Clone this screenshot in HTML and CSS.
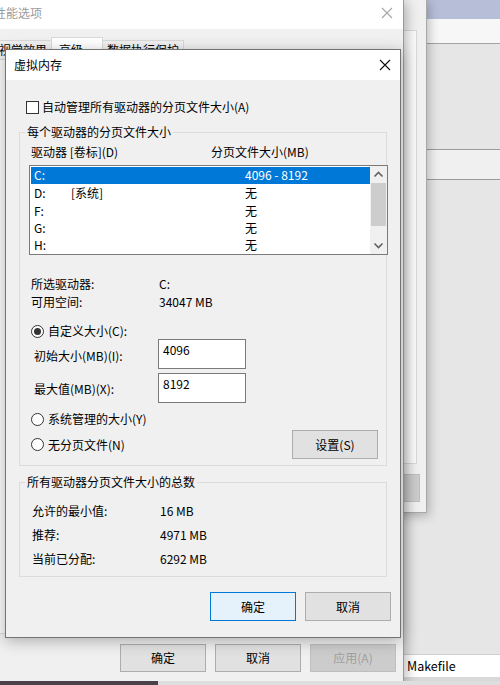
FILE: index.html
```html
<!DOCTYPE html>
<html lang="zh-CN">
<head>
<meta charset="utf-8">
<title>虚拟内存</title>
<link rel="stylesheet" href="styles.css">
</head>
<body>
<div class="desktop">

  <div class="explorer">
    <div class="ex-title"></div>
    <div class="ex-ribbon"></div>
    <div class="ex-pane"></div>
    <div class="ex-band"></div>
    <div class="ex-list"></div>
    <div class="ex-file">Makefile</div>
    <div class="ex-rest"></div>
  </div>

  <div class="sysprops">
    <div class="sp-page"></div>
    <div class="sp-buttons"><div class="sp-btn"></div></div>
  </div>

  <div class="perf">
    <div class="perf-title">
      <span class="perf-caption">性能选项</span>
      <svg class="perf-close" width="12" height="12" viewBox="0 0 12 12"><path d="M1 1L11 11M11 1L1 11" stroke="#a6a6a6" stroke-width="1.1" fill="none"/></svg>
    </div>
    <div class="perf-tabs">
      <div class="tab tab-first">视觉效果</div>
      <div class="tab tab-active">高级</div>
      <div class="tab tab-last">数据执行保护</div>
    </div>
    <div class="perf-page"></div>
    <div class="perf-buttons">
      <div class="btn">确定</div>
      <div class="btn">取消</div>
      <div class="btn btn-disabled">应用(A)</div>
    </div>
  </div>

  <div class="dialog">
    <div class="dlg-title">
      <span>虚拟内存</span>
      <svg class="dlg-close" width="12" height="12" viewBox="0 0 12 12"><path d="M1 1L11 11M11 1L1 11" stroke="#111" stroke-width="1.1" fill="none"/></svg>
    </div>
    <div class="dlg-body">
      <div class="check-row">
        <span class="checkbox"></span>
        <span>自动管理所有驱动器的分页文件大小(A)</span>
      </div>

      <fieldset class="group group-drives">
        <legend>每个驱动器的分页文件大小</legend>
        <div class="col-heads">
          <span class="col-drive">驱动器 [卷标](D)</span>
          <span>分页文件大小(MB)</span>
        </div>
        <div class="listbox">
          <div class="list-rows">
            <div class="lrow selected"><span class="c1">C:</span><span class="c2"></span><span>4096 - 8192</span></div>
            <div class="lrow"><span class="c1">D:</span><span class="c2">[系统]</span><span>无</span></div>
            <div class="lrow"><span class="c1">F:</span><span class="c2"></span><span>无</span></div>
            <div class="lrow"><span class="c1">G:</span><span class="c2"></span><span>无</span></div>
            <div class="lrow"><span class="c1">H:</span><span class="c2"></span><span>无</span></div>
          </div>
          <div class="scrollbar">
            <svg class="arrow" width="17" height="17" viewBox="0 0 17 17"><path d="M4.5 10.5L8.5 6.5L12.5 10.5" stroke="#606060" stroke-width="1.6" fill="none"/></svg>
            <div class="thumb"></div>
            <div class="track"></div>
            <svg class="arrow" width="17" height="17" viewBox="0 0 17 17"><path d="M4.5 6.5L8.5 10.5L12.5 6.5" stroke="#606060" stroke-width="1.6" fill="none"/></svg>
          </div>
        </div>

        <div class="info-row first"><span class="info-label">所选驱动器:</span><span>C:</span></div>
        <div class="info-row"><span class="info-label">可用空间:</span><span>34047 MB</span></div>

        <div class="radio-row custom"><span class="radio on"></span><span>自定义大小(C):</span></div>

        <div class="field-row first-field">
          <span class="field-label">初始大小(MB)(I):</span>
          <div class="textbox">4096</div>
        </div>
        <div class="field-row second-field">
          <span class="field-label">最大值(MB)(X):</span>
          <div class="textbox">8192</div>
        </div>

        <div class="radio-row system"><span class="radio"></span><span>系统管理的大小(Y)</span></div>
        <div class="last-row">
          <div class="radio-row"><span class="radio"></span><span>无分页文件(N)</span></div>
          <div class="btn">设置(S)</div>
        </div>
      </fieldset>

      <fieldset class="group group-total">
        <legend>所有驱动器分页文件大小的总数</legend>
        <div class="total-row first"><span class="info-label">允许的最小值:</span><span>16 MB</span></div>
        <div class="total-row"><span class="info-label">推荐:</span><span>4971 MB</span></div>
        <div class="total-row"><span class="info-label">当前已分配:</span><span>6292 MB</span></div>
      </fieldset>

      <div class="dlg-buttons">
        <div class="btn btn-default">确定</div>
        <div class="btn">取消</div>
      </div>
    </div>
  </div>

  <div class="bottom-strip">
    <div class="strip-dark"></div>
    <div class="strip-light"></div>
  </div>
</div>
</body>
</html>
```

FILE: styles.css
```css
* { box-sizing: border-box; }

html, body {
  margin: 0;
  padding: 0;
}

body {
  font-family: "Noto Sans CJK SC", "Noto Sans", sans-serif;
  font-size: 12px;
  line-height: 16px;
  color: #000;
  background: #e6e6e6;
}

.desktop {
  position: relative;
  width: 500px;
  height: 685px;
  overflow: hidden;
  background: #e6e6e6;
}

/* ---------- explorer window (far right) ---------- */
.explorer {
  position: absolute;
  left: 380px;
  top: 0;
  width: 120px;
  height: 685px;
  display: flex;
  flex-direction: column;
}
.ex-title { height: 19px; background: #b7bed8; }
.ex-ribbon { height: 25px; background: #f7f7f7; border-bottom: 1px solid #a3a3a3; }
.ex-pane { height: 106px; background: #e6e6e6; border-bottom: 1px solid #9b9b9b; }
.ex-band { height: 30px; background: #f0f0f0; border-bottom: 1px solid #9b9b9b; }
.ex-list { height: 475px; background: #e6e6e6; border-bottom: 1px solid #cfcfcf; }
.ex-file {
  height: 22px;
  background: #fff;
  padding-left: 27px;
  line-height: 22px;
  font-size: 12.5px;
  color: #000;
}
.ex-rest { flex: 1; background: #d9d9d9; }

/* ---------- system properties window (behind) ---------- */
.sysprops {
  position: absolute;
  left: 150px;
  top: -1px;
  width: 277px;
  height: 514px;
  background: #f0f0f0;
  border: 1px solid #a8a8a8;
  box-shadow: 2px 3px 10px rgba(0, 0, 0, 0.25);
  display: flex;
  flex-direction: column;
  padding: 30px 9px 0 10px;
}
.sp-page {
  height: 434px;
  background: #fbfbfb;
  border: 1px solid #d9d9d9;
}
.sp-buttons {
  display: flex;
  justify-content: flex-end;
  padding: 10px 0 0;
}
.sp-btn {
  width: 75px;
  height: 28px;
  margin-right: -3px;
  background: #cccccc;
  border: 1px solid #bfbfbf;
}

/* ---------- performance options window ---------- */
.perf {
  position: absolute;
  left: -20px;
  top: -1px;
  width: 424px;
  height: 683px;
  background: #f0f0f0;
  border: 1px solid #9a9a9a;
  box-shadow: 2px 3px 12px rgba(0, 0, 0, 0.3);
  display: flex;
  flex-direction: column;
}
.perf-title {
  height: 29px;
  background: #fff;
  display: flex;
  align-items: center;
  justify-content: space-between;
  padding: 0 10px 4px 13px;
}
.perf-caption { color: #9b9b9b; }
.perf-close { display: block; }

.perf-tabs {
  display: flex;
  align-items: flex-end;
  height: 30px;
}
.tab {
  height: 19px;
  border: 1px solid #d9d9d9;
  border-bottom: none;
  background: #f0f0f0;
  padding: 1px 0 0;
  white-space: nowrap;
  overflow: hidden;
}
.tab-first { width: 70px; padding-left: 17px; border-right: none; }
.tab-active { width: 52px; height: 22px; background: #fff; padding: 4px 0 0 7px; }
.tab-last { width: 81px; padding-left: 4px; border-left: none; }

.perf-page {
  height: 575px;
  margin-right: 7px;
  background: #fafafa;
  border: 1px solid #d9d9d9;
}
.perf-buttons {
  display: flex;
  justify-content: flex-end;
  gap: 9px;
  padding: 10px 7px 0 0;
}
.perf-buttons .btn { height: 28px; }

/* ---------- buttons ---------- */
.btn {
  width: 86px;
  height: 29px;
  background: #e1e1e1;
  border: 1px solid #adadad;
  display: flex;
  align-items: center;
  justify-content: center;
}
.btn-default {
  background: #e5f1fb;
  border-color: #0078d7;
}
.btn-disabled {
  background: #cccccc;
  border-color: #bfbfbf;
  color: #a0a0a0;
}

/* ---------- virtual memory dialog ---------- */
.dialog {
  position: absolute;
  left: 5px;
  top: 49px;
  width: 396px;
  height: 589px;
  border: 1px solid #737373;
  background: #f0f0f0;
  box-shadow: 0 3px 14px rgba(0, 0, 0, 0.28);
  display: flex;
  flex-direction: column;
}
.dlg-title {
  height: 30px;
  background: #fff;
  display: flex;
  align-items: center;
  justify-content: space-between;
  padding: 0 9px 0 8px;
}
.dlg-close { display: block; }

.dlg-body {
  flex: 1;
  padding: 19px 13px 0 0;
}

.check-row {
  display: flex;
  align-items: center;
  gap: 3px;
  padding-left: 20px;
  height: 16px;
}
.checkbox {
  width: 13px;
  height: 13px;
  border: 1px solid #333;
  background: #fff;
  flex: none;
}

.group {
  margin: 9px 0 0 13px;
  padding: 0;
  border: 1px solid #dcdcdc;
  min-width: 0;
}
.group legend {
  padding: 0 2px;
  margin-left: 5px;
  line-height: 16px;
}

.col-heads {
  display: flex;
  padding: 4px 0 0 11px;
}
.col-drive { width: 180px; }

.listbox {
  margin: 5px -2px 0 9px;
  height: 90px;
  border: 1px solid #7a7a7a;
  background: #fff;
  display: flex;
}
.list-rows {
  flex: 1;
  padding: 1px 0 0 1px;
}
.lrow {
  display: flex;
  height: 17.3px;
  line-height: 17px;
  padding-left: 3px;
}
.lrow .c1 { width: 37px; }
.lrow .c2 { width: 174px; }
.lrow.selected {
  background: #0078d7;
  color: #fff;
  height: 16.5px;
  margin-bottom: 0.8px;
  line-height: 16.5px;
}

.scrollbar {
  width: 17px;
  background: #f0f0f0;
  display: flex;
  flex-direction: column;
}
.arrow { display: block; flex: none; }
.thumb {
  height: 43px;
  margin: 0 1px;
  background: #cdcdcd;
}
.track { flex: 1; }

.info-row {
  display: flex;
  height: 18px;
  padding-left: 11px;
}
.info-row.first { margin-top: 21px; }
.info-label { width: 128px; flex: none; }

.radio-row {
  display: flex;
  align-items: center;
  gap: 4px;
  padding-left: 11px;
  height: 16px;
}
.radio {
  width: 13px;
  height: 13px;
  border: 1px solid #333;
  border-radius: 50%;
  background: #fff;
  flex: none;
  display: flex;
  align-items: center;
  justify-content: center;
}
.radio.on::after {
  content: "";
  width: 7px;
  height: 7px;
  border-radius: 50%;
  background: #333;
}
.radio-row.custom { margin-top: 11px; }
.radio-row.system { margin-top: 8px; }

.field-row {
  display: flex;
  padding-left: 14px;
}
.second-field { margin-top: 4px; }
.field-label {
  width: 124px;
  flex: none;
  padding-top: 9px;
}
.second-field .field-label { padding-top: 8px; }
.textbox {
  width: 88px;
  height: 30px;
  border: 1px solid #7a7a7a;
  background: #fff;
  padding: 2px 0 0 4px;
}

.last-row {
  display: flex;
  align-items: center;
  justify-content: space-between;
  margin-top: 3px;
  padding-right: 8px;
  padding-bottom: 6px;
}
.last-row .radio-row { height: 29px; }

.group-total { margin-top: 8px; }
.total-row {
  display: flex;
  height: 24px;
  align-items: center;
  padding-left: 12px;
}
.total-row.first { margin-top: 9px; }
.total-row:last-child { margin-bottom: 5px; }

.dlg-buttons {
  display: flex;
  justify-content: flex-end;
  gap: 9px;
  margin-top: 15px;
  margin-right: -4px;
}

/* ---------- bottom desktop strip ---------- */
.bottom-strip {
  position: absolute;
  left: 0;
  top: 681px;
  width: 500px;
  height: 4px;
  display: flex;
}
.strip-dark { width: 158px; background: #4b4149; }
.strip-light { flex: 1; background: #dedede; }
```
